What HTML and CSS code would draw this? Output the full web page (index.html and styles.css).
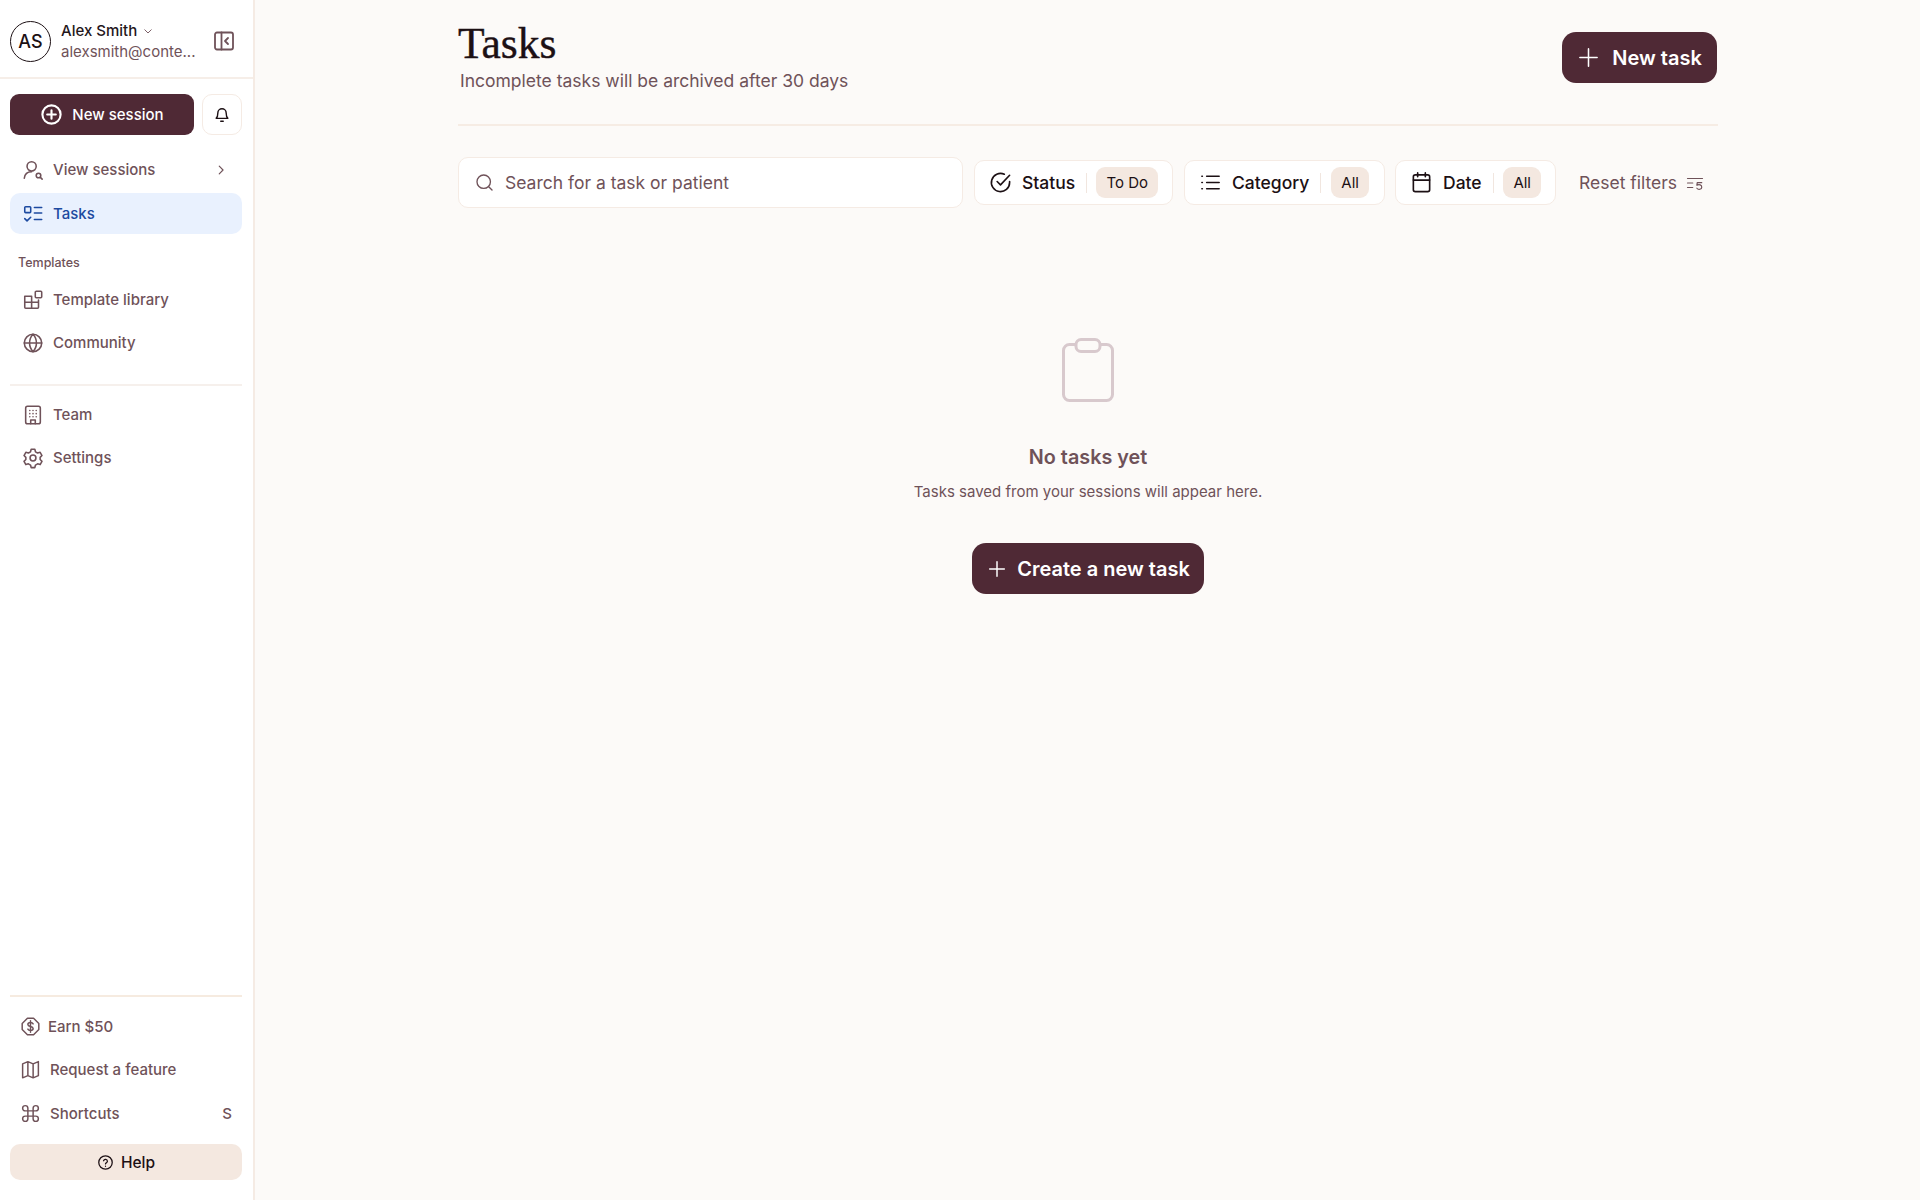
FILE: index.html
```html
<!DOCTYPE html>
<html lang="en">
<head>
    <meta charset="UTF-8">
    <title>Tasks</title>
    <link rel="stylesheet" href="styles.css">
</head>
<body>
    <div class="app">
        <!-- Sidebar -->
        <aside class="sidebar">
            <div class="account">
                <div class="avatar">AS</div>
                <div class="account-text">
                    <div class="account-name">Alex Smith
                        <svg class="caret" viewBox="0 0 24 24"><path d="M5 9l7 7 7-7"/></svg>
                    </div>
                    <div class="account-mail">alexsmith@conte...</div>
                </div>
                <svg class="icon collapse" viewBox="0 0 24 24"><rect x="3" y="3.500" width="18" height="17" rx="2"/><path d="M9.500 3.500v17M16 9l-3 3 3 3"/></svg>
            </div>

            <div class="session-row">
                <button class="btn-dark btn-session">
                    <svg class="icon" viewBox="0 0 24 24"><circle cx="12" cy="12" r="9.500"/><path d="M12 7.500v9M7.500 12h9"/></svg>
                    New session
                </button>
                <button class="bell">
                    <svg class="icon" viewBox="0 1 24 24"><path d="M5 17c1.500-1.500 2-3 2-6.500a5 5 0 0 1 10 0c0 3.500.5 5 2 6.500z"/><path d="M10.500 20.500h3"/></svg>
                </button>
            </div>

            <nav class="nav nav-main">
                <a class="nav-item">
                    <svg class="icon" viewBox="0 0 24 24"><circle cx="10.500" cy="8" r="5"/><path d="M2.500 21c.5-4.500 3.500-7 8-7"/><circle cx="18" cy="18" r="2.500"/><path d="M20 20l2 2"/></svg>
                    View sessions
                    <svg class="icon chevron" viewBox="0 0 24 24"><path d="M9 5.500l6.500 6.500L9 18.500"/></svg>
                </a>
                <a class="nav-item active">
                    <svg class="icon" viewBox="0 0 24 24"><rect x="3" y="4" width="6.500" height="6.500" rx="1"/><path d="M13.500 5h8M13.500 11h8M13.500 18h8M3 17l2.500 2.500L9.500 15.500"/></svg>
                    Tasks
                </a>
            </nav>

            <div class="nav-label">Templates</div>
            <nav class="nav nav-templates">
                <a class="nav-item">
                    <svg class="icon" viewBox="0 0 24 24"><path d="M3 8h7.500v13H4a1 1 0 0 1-1-1zM3 14.500h15V20a1 1 0 0 1-1 1h-6.500M10.500 14.500H18V12"/><rect x="14.500" y="2.500" width="7" height="7" rx="1"/></svg>
                    Template library
                </a>
                <a class="nav-item">
                    <svg class="icon" viewBox="0 0 24 24"><circle cx="12" cy="12" r="9.500"/><path d="M2.500 12h19M12 2.500c-5 5.500-5 13.500 0 19M12 2.500c5 5.500 5 13.500 0 19"/></svg>
                    Community
                </a>
            </nav>

            <div class="rule"></div>

            <nav class="nav nav-team">
                <a class="nav-item">
                    <svg class="icon" viewBox="0 0 24 24"><rect x="4" y="2.500" width="16" height="19" rx="2"/><path d="M9.500 21.500v-4h5v4"/><path class="dots" d="M8.500 7h.01M12 7h.01M15.500 7h.01M8.500 10.500h.01M12 10.500h.01M15.500 10.500h.01M8.500 14h.01M12 14h.01M15.500 14h.01"/></svg>
                    Team
                </a>
                <a class="nav-item">
                    <svg class="icon" viewBox="0 0 24 24"><path d="M10 2.500h4l.7 2.800 2.300 1.300 2.800-.8 2 3.500-2 2v2.400l2 2-2 3.500-2.800-.8-2.300 1.300-.7 2.800h-4l-.7-2.800L7 18.400l-2.800.8-2-3.500 2-2v-2.400l-2-2 2-3.500 2.800.8 2.300-1.300z"/><circle cx="12" cy="12" r="3.200"/></svg>
                    Settings
                </a>
            </nav>

            <div class="sidebar-foot">
                <div class="rule rule-foot"></div>
                <a class="foot-item foot-earn">
                    <svg class="icon" viewBox="0 0 24 24"><path d="M8.500 2.500h7l6 6v7l-6 6h-7l-6-6v-7z"/><path d="M15 9c-.5-1-1.500-1.500-3-1.500-2 0-3 1-3 2.200 0 3 6 1.600 6 4.600 0 1.200-1 2.200-3 2.200-1.500 0-2.500-.5-3-1.500M12 5.500v13"/></svg>
                    Earn $50
                </a>
                <a class="foot-item">
                    <svg class="icon" viewBox="0 0 24 24"><path d="M3 5.500l6-2.500 6 2.500 6-2.500v16l-6 2.500-6-2.500-6 2.500zM9 3v16M15 5.500v16"/></svg>
                    Request a feature
                </a>
                <a class="foot-item">
                    <svg class="icon" viewBox="0 0 24 24"><path d="M9 9h6v6H9zM9 9H6a3 3 0 1 1 3-3zM15 9V6a3 3 0 1 1 3 3zM15 15h3a3 3 0 1 1-3 3zM9 15v3a3 3 0 1 1-3-3z"/></svg>
                    Shortcuts
                    <span class="key">S</span>
                </a>
                <button class="help">
                    <svg class="icon" viewBox="0 0 24 24"><circle cx="12" cy="12" r="9.500"/><path d="M9.300 9.500a2.800 2.800 0 0 1 5.400.7c0 1.900-2.700 2.200-2.700 3.800M12 17.300h.01"/></svg>
                    Help
                </button>
            </div>
        </aside>

        <!-- Main -->
        <main class="main">
            <div class="content">
                <header class="page-head">
                    <div>
                        <h1>Tasks</h1>
                        <p class="page-sub">Incomplete tasks will be archived after 30 days</p>
                    </div>
                    <button class="btn-dark btn-new">
                        <svg class="icon" viewBox="0 0 24 24"><path d="M12 3v18M3 12h18"/></svg>
                        New task
                    </button>
                </header>

                <div class="filters">
                    <div class="search">
                        <svg class="icon" viewBox="0 0 24 24"><circle cx="11" cy="11" r="8.500"/><path d="M17.300 17.300l4.200 4.200"/></svg>
                        Search for a task or patient
                    </div>
                    <div class="filter filter-status">
                        <svg class="icon" viewBox="0 0 24 24"><path d="M21.500 11v1a9.500 9.500 0 1 1-5.500-8.600"/><path d="M8.500 11l3.500 3.500 9.500-10"/></svg>
                        <span class="filter-name">Status</span>
                        <span class="filter-sep"></span>
                        <span class="pill">To Do</span>
                    </div>
                    <div class="filter filter-category">
                        <svg class="icon" viewBox="0 0 24 24"><path d="M8 5.500h13M8 12h13M8 18.500h13M3 5.500h.5M3 12h.5M3 18.500h.5"/></svg>
                        <span class="filter-name">Category</span>
                        <span class="filter-sep"></span>
                        <span class="pill">All</span>
                    </div>
                    <div class="filter filter-date">
                        <svg class="icon" viewBox="0 0 24 24"><rect x="3.500" y="4" width="17" height="17.500" rx="2"/><path d="M3.500 9.500h17M8 2v4M16 2v4"/></svg>
                        <span class="filter-name">Date</span>
                        <span class="filter-sep"></span>
                        <span class="pill">All</span>
                    </div>
                    <div class="reset">
                        Reset filters
                        <svg class="icon" viewBox="0 0 24 24"><path d="M2 6h20M2 12h7M2 18h7M21 11.500h-6l-.5 3.500c3-1.500 6.500-.5 6.500 2.500s-4.500 4-6.500 1.500"/></svg>
                    </div>
                </div>

                <section class="empty">
                    <svg class="empty-icon" viewBox="0 0 52 64"><rect x="1.500" y="6.500" width="49" height="56" rx="6"/><rect x="14" y="1.500" width="24" height="12" rx="5" class="empty-clip"/></svg>
                    <h2>No tasks yet</h2>
                    <p>Tasks saved from your sessions will appear here.</p>
                    <button class="btn-dark btn-create">
                        <svg class="icon" viewBox="0 0 24 24"><path d="M12 4v16M4 12h16"/></svg>
                        Create a new task
                    </button>
                </section>
            </div>
        </main>
    </div>
</body>
</html>
```

FILE: styles.css
```css
* {
    box-sizing: border-box;
}

body {
    margin: 0;
    height: 1200px;
    overflow: hidden;
    font-family: "Inter", "Liberation Sans", sans-serif;
    color: #6f5259;
    background: #fcfaf8;
}

button {
    font-family: inherit;
    border: none;
    cursor: pointer;
}

.app {
    display: flex;
    height: 100%;
}

.icon {
    fill: none;
    stroke: currentColor;
    stroke-width: 2;
    stroke-linecap: round;
    stroke-linejoin: round;
    flex-shrink: 0;
}

/* Sidebar */
.sidebar {
    width: 255px;
    flex-shrink: 0;
    display: flex;
    flex-direction: column;
    background: #fff;
    border-right: 2px solid #f5ebe4;
}

.account {
    height: 79px;
    padding: 5px 17px 0 10px;
    display: flex;
    align-items: center;
    border-bottom: 2px solid #f6eee8;
}

.avatar {
    width: 41px;
    height: 41px;
    border-radius: 50%;
    border: 1.500px solid #1c1014;
    color: #1c1014;
    font-size: 18px;
    font-weight: 500;
    display: flex;
    align-items: center;
    justify-content: center;
    margin-right: 10px;
    flex-shrink: 0;
}

.account-text {
    flex: 1;
    min-width: 0;
    margin-top: 1px;
}

.account-name {
    display: flex;
    align-items: center;
    gap: 5px;
    font-size: 15px;
    line-height: 20px;
    font-weight: 500;
    color: #24161b;
}

.caret {
    width: 12px;
    height: 12px;
    fill: none;
    stroke: #7d6168;
    stroke-width: 2;
}

.account-mail {
    font-size: 15px;
    line-height: 21px;
    white-space: nowrap;
}

.collapse {
    width: 24px;
    height: 24px;
    stroke-width: 1.800;
}

.session-row {
    display: flex;
    gap: 8px;
    padding: 15px 11px 0 10px;
}

.btn-dark {
    display: flex;
    align-items: center;
    justify-content: center;
    color: #fff;
    background: #4f2935;
    font-weight: 600;
}

.btn-session {
    width: 184px;
    height: 41px;
    gap: 9px;
    border-radius: 9px;
    font-size: 15px;
    font-weight: 500;
}

.btn-session .icon {
    width: 23px;
    height: 23px;
    stroke-width: 2.200;
}

.bell {
    width: 40px;
    height: 41px;
    border-radius: 10px;
    border: 1.500px solid #f5ebe4;
    background: #fff;
    color: #1c1014;
    display: flex;
    align-items: center;
    justify-content: center;
    padding: 0;
}

.bell .icon {
    width: 20px;
    height: 20px;
    stroke-width: 1.700;
}

.nav {
    display: flex;
    flex-direction: column;
    padding: 0 11px 0 10px;
}

.nav-main {
    margin-top: 14px;
}

.nav-item {
    height: 43px;
    display: flex;
    align-items: center;
    gap: 9px;
    padding-left: 12px;
    font-size: 15px;
    font-weight: 500;
    border-radius: 10px;
}

.nav-item .icon {
    width: 22px;
    height: 22px;
    stroke-width: 1.700;
}

.nav-item .chevron {
    width: 14px;
    height: 14px;
    stroke-width: 2;
    margin-left: auto;
    margin-right: 14px;
}

.nav-main .nav-item {
    height: 41px;
}

.nav-main .nav-item.active {
    margin-top: 3px;
}

.nav-item.active {
    color: #1c4aa0;
    background: #e9f1fe;
}

.nav-label {
    font-size: 12.500px;
    font-weight: 500;
    line-height: 16px;
    padding: 21px 0 0 18px;
}

.nav-templates {
    margin-top: 7px;
}

.rule {
    height: 2px;
    margin: 20px 11px 0 10px;
    background: #f6f0ec;
    flex-shrink: 0;
}

.nav-team {
    margin-top: 7px;
}

.sidebar-foot {
    margin-top: auto;
    padding-bottom: 20px;
}

.rule-foot {
    margin-top: 0;
    background: #f6ebe0;
}

.foot-item {
    height: 44px;
    display: flex;
    align-items: center;
    gap: 9px;
    padding: 0 21px 0 20px;
    font-size: 15px;
    font-weight: 500;
}

.foot-earn {
    height: 42px;
    margin-top: 8px;
    gap: 7px;
}

.foot-item .icon {
    width: 21px;
    height: 21px;
    stroke-width: 1.700;
}

.key {
    margin-left: auto;
    font-size: 15px;
}

.help {
    width: 232px;
    height: 36px;
    margin: 9px 0 0 10px;
    border-radius: 10px;
    background: #f4e8e0;
    color: #1c1014;
    display: flex;
    align-items: center;
    justify-content: center;
    gap: 7px;
    font-size: 15.500px;
    font-weight: 500;
}

.help .icon {
    width: 17px;
    height: 17px;
    stroke-width: 1.800;
}

/* Main */
.main {
    flex: 1;
    display: flex;
    justify-content: center;
}

.content {
    width: 1260px;
    margin-left: 1px;
}

.page-head {
    height: 126px;
    display: flex;
    justify-content: space-between;
    align-items: flex-start;
    border-bottom: 2px solid #f6ece4;
}

h1 {
    margin: 19px 0 0;
    font-family: "Liberation Serif", serif;
    font-size: 43.500px;
    line-height: 48px;
    font-weight: 400;
    color: #1c1014;
    -webkit-text-stroke: 0.400px #1c1014;
}

.page-sub {
    margin: 2px 0 0 2px;
    font-size: 17.500px;
    line-height: 24px;
}

.btn-new {
    width: 155px;
    height: 51px;
    margin: 32px 1px 0 0;
    gap: 12px;
    border-radius: 14px;
    font-size: 20px;
}

.btn-new .icon {
    width: 23px;
    height: 23px;
    stroke-width: 1.600;
}

.filters {
    display: flex;
    align-items: center;
    margin-top: 31px;
}

.search {
    width: 505px;
    height: 51px;
    padding-left: 16px;
    display: flex;
    align-items: center;
    gap: 11px;
    background: #fff;
    border: 1.500px solid #f5ebe4;
    border-radius: 10px;
    font-size: 17.500px;
}

.search .icon {
    width: 19px;
    height: 19px;
    stroke-width: 1.700;
}

.filter {
    height: 45px;
    margin-left: 11px;
    padding: 0 14px;
    display: flex;
    align-items: center;
    background: #fff;
    border: 1.500px solid #f5ebe4;
    border-radius: 10px;
    color: #1c1014;
    flex-shrink: 0;
}

.filter .icon {
    width: 23px;
    height: 23px;
    stroke-width: 1.700;
}

.filter-name {
    margin-left: 10px;
    font-size: 17.500px;
    font-weight: 500;
}

.filter-sep {
    width: 1px;
    height: 20px;
    margin: 0 10px 0 11px;
    background: #f1e6df;
}

.pill {
    height: 31px;
    padding: 0 10px;
    display: flex;
    align-items: center;
    border-radius: 9px;
    background: #f4e8e0;
    font-size: 15px;
    white-space: nowrap;
}

.filter-status {
    width: 199px;
}

.filter-category {
    width: 201px;
}

.filter-date {
    width: 161px;
    margin-left: 10px;
}

.reset {
    margin-left: 23px;
    display: flex;
    align-items: center;
    gap: 9px;
    font-size: 17.500px;
    white-space: nowrap;
}

.reset .icon {
    width: 18px;
    height: 18px;
    stroke-width: 1.600;
}

.empty {
    display: flex;
    flex-direction: column;
    align-items: center;
    margin-top: 130px;
}

.empty-icon {
    width: 52px;
    height: 64px;
    fill: none;
    stroke: #d8c9cd;
    stroke-width: 3;
}

.empty-clip {
    fill: #fcfaf8;
}

.empty h2 {
    margin: 41px 0 0;
    font-size: 19.800px;
    line-height: 28px;
    font-weight: 600;
}

.empty p {
    margin: 10px 0 0;
    font-size: 15px;
    line-height: 22px;
}

.btn-create {
    width: 232px;
    height: 51px;
    margin-top: 40px;
    gap: 9px;
    border-radius: 14px;
    font-size: 20px;
}

.btn-create .icon {
    width: 22px;
    height: 22px;
    stroke-width: 1.600;
}
```
